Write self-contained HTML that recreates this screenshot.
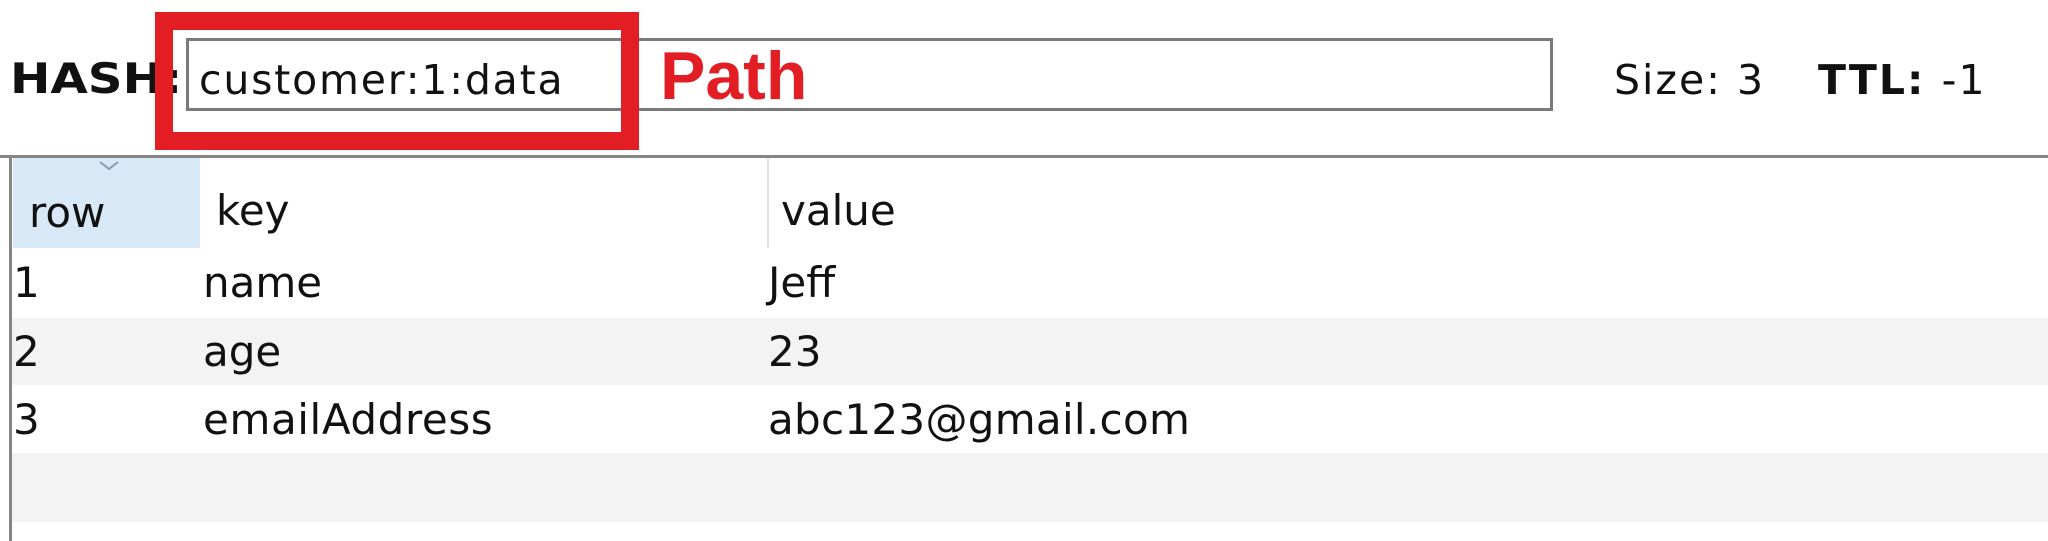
<!DOCTYPE html>
<html><head><meta charset="utf-8"><style>
html,body{margin:0;padding:0;background:#fff;width:2048px;height:541px;overflow:hidden;position:relative;font-family:"DejaVu Sans","Liberation Sans",sans-serif;color:#111}
.a{position:absolute;white-space:nowrap;line-height:1}
</style></head><body>
<div class="a" style="left:10px;top:58px;font-size:42px;font-weight:bold;transform:scaleX(1.15);transform-origin:0 0">HASH:</div>
<div class="a" style="left:186px;top:38px;width:1361px;height:67px;border:3px solid #7a7a7a;background:#fff"></div>
<div class="a" style="left:199px;top:60px;font-size:41px;letter-spacing:1.8px">customer:1:data</div>
<div class="a" style="left:155px;top:12px;width:448px;height:102px;border:18px solid #e21d24"></div>
<div class="a" style="left:660px;top:42px;font-size:68px;font-weight:bold;color:#e21d24;font-family:'Liberation Sans',sans-serif">Path</div>
<div class="a" style="left:1614px;top:60px;font-size:41px;letter-spacing:2px">Size: 3</div>
<div class="a" style="left:1818px;top:60px;font-size:41px;font-weight:bold;letter-spacing:2px">TTL: <span style="font-weight:normal">-1</span></div>

<div class="a" style="left:0;top:155px;width:2048px;height:3px;background:#858585"></div>
<div class="a" style="left:9px;top:158px;width:3px;height:383px;background:#858585"></div>
<div class="a" style="left:13px;top:158px;width:187px;height:90px;background:#d9e8f6"></div>
<svg class="a" style="left:98px;top:160px" width="22" height="12"><path d="M2 2 L11 9 L20 2" stroke="#8a9bb0" stroke-width="2" fill="none"/></svg>
<div class="a" style="left:767px;top:158px;width:2px;height:90px;background:#e2e2e2"></div>
<div class="a" style="left:29px;top:192px;font-size:42px">row</div>
<div class="a" style="left:216px;top:190px;font-size:42px">key</div>
<div class="a" style="left:781px;top:190px;font-size:42px">value</div>

<div class="a" style="left:12px;top:318px;width:2036px;height:67px;background:#f3f3f3"></div>
<div class="a" style="left:12px;top:453px;width:2036px;height:69px;background:#f3f3f3"></div>

<div class="a" style="left:13px;top:262px;font-size:42px">1</div>
<div class="a" style="left:203px;top:262px;font-size:42px">name</div>
<div class="a" style="left:768px;top:262px;font-size:42px">Jeff</div>
<div class="a" style="left:13px;top:331px;font-size:42px">2</div>
<div class="a" style="left:203px;top:331px;font-size:42px">age</div>
<div class="a" style="left:768px;top:331px;font-size:42px">23</div>
<div class="a" style="left:13px;top:399px;font-size:42px">3</div>
<div class="a" style="left:203px;top:399px;font-size:42px;letter-spacing:0.6px">emailAddress</div>
<div class="a" style="left:768px;top:399px;font-size:42px;letter-spacing:0.3px">abc123@gmail.com</div>
</body></html>
